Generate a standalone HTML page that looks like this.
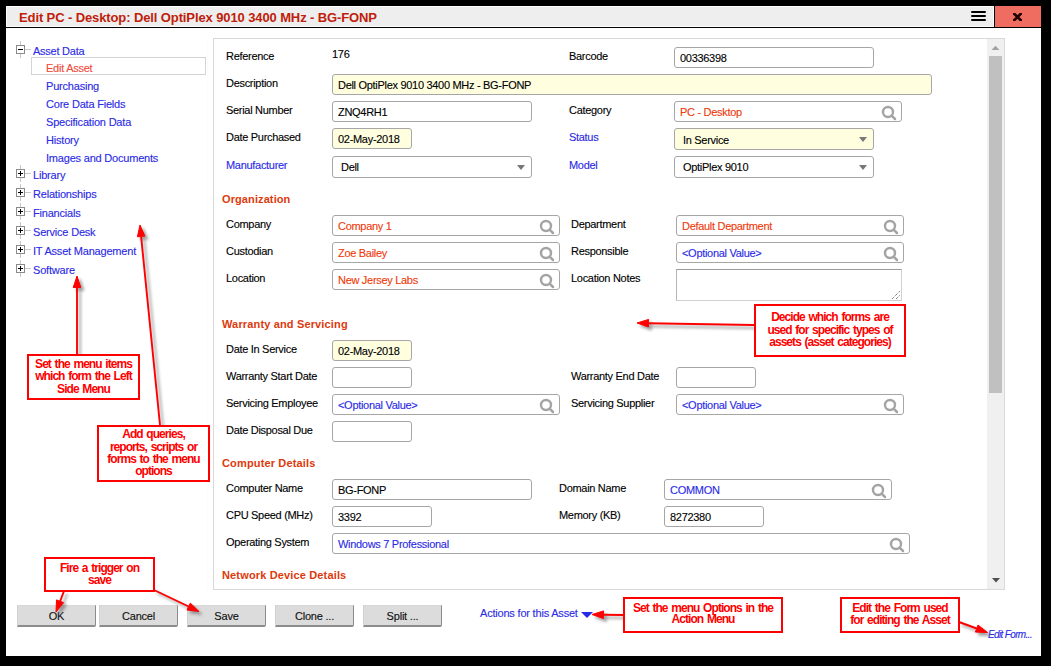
<!DOCTYPE html><html><head><meta charset="utf-8"><style>
html,body{margin:0;padding:0;}
body{width:1051px;height:666px;background:#000;position:relative;overflow:hidden;font-family:"Liberation Sans", sans-serif;}
.t{position:absolute;white-space:nowrap;font-family:"Liberation Sans", sans-serif;-webkit-text-stroke:0.12px currentColor;}
.r{position:absolute;box-sizing:border-box;}

</style></head><body>
<div class="r" style="left:6px;top:6px;width:1035px;height:650px;background:#ffffff;"></div>
<div class="r" style="left:6px;top:6px;width:988px;height:21px;background:#eeeeee;border:1px solid #ffffff;"></div>
<div class="r" style="left:6px;top:27px;width:1035px;height:1px;background:#000;"></div>
<div class="r" style="left:994px;top:6px;width:1px;height:21px;background:#000;"></div>
<div class="r" style="left:995px;top:6px;width:46px;height:21px;background:#ef6c61;"></div>
<svg class="r" style="left:1013px;top:13px" width="9" height="8" viewBox="0 0 9 8"><path d="M0.3 0 L8.7 8 M8.7 0 L0.3 8" stroke="#1e0000" stroke-width="2.7"/></svg>
<div class="r" style="left:971px;top:11px;width:15px;height:2px;background:#000;border-radius:1px;"></div>
<div class="r" style="left:971px;top:15px;width:15px;height:2px;background:#000;border-radius:1px;"></div>
<div class="r" style="left:971px;top:19px;width:15px;height:2px;background:#000;border-radius:1px;"></div>
<div class="t" style="left:19px;top:10px;font-size:13px;line-height:15px;color:#c0200a;font-weight:bold;-webkit-text-stroke:0;letter-spacing:-0.11px;">Edit PC - Desktop: Dell OptiPlex 9010 3400 MHz - BG-FONP</div>
<div class="r" style="left:20px;top:41px;width:1px;height:4px;background:#c8c8c8;"></div>
<div class="r" style="left:20px;top:54px;width:1px;height:4px;background:#c8c8c8;"></div>
<div class="r" style="left:25px;top:49px;width:6px;height:1px;background:#c8c8c8;"></div>
<div class="r" style="left:16px;top:45px;width:9px;height:9px;background:#fff;border:1px solid #8a8a8a;"></div>
<div class="r" style="left:18px;top:49px;width:5px;height:1px;background:#000;"></div>
<div class="t" style="left:33px;top:45px;font-size:11px;line-height:13px;color:#2a2ae6;letter-spacing:-0.25px;">Asset Data</div>
<div class="r" style="left:31px;top:57px;width:175px;height:18px;border:1px solid #d4d4d4;"></div>
<div class="t" style="left:46px;top:62px;font-size:11px;line-height:13px;color:#ef4a3a;letter-spacing:-0.25px;">Edit Asset</div>
<div class="t" style="left:46px;top:80px;font-size:11px;line-height:13px;color:#2a2ae6;letter-spacing:-0.2px;">Purchasing</div>
<div class="t" style="left:46px;top:98px;font-size:11px;line-height:13px;color:#2a2ae6;letter-spacing:-0.2px;">Core Data Fields</div>
<div class="t" style="left:46px;top:116px;font-size:11px;line-height:13px;color:#2a2ae6;letter-spacing:-0.2px;">Specification Data</div>
<div class="t" style="left:46px;top:134px;font-size:11px;line-height:13px;color:#2a2ae6;letter-spacing:-0.2px;">History</div>
<div class="t" style="left:46px;top:152px;font-size:11px;line-height:13px;color:#2a2ae6;letter-spacing:-0.2px;">Images and Documents</div>
<div class="r" style="left:20px;top:165px;width:1px;height:4px;background:#c8c8c8;"></div>
<div class="r" style="left:20px;top:178px;width:1px;height:4px;background:#c8c8c8;"></div>
<div class="r" style="left:25px;top:173px;width:6px;height:1px;background:#c8c8c8;"></div>
<div class="r" style="left:16px;top:169px;width:9px;height:9px;background:#fff;border:1px solid #8a8a8a;"></div>
<div class="r" style="left:18px;top:173px;width:5px;height:1px;background:#000;"></div>
<div class="r" style="left:20px;top:171px;width:1px;height:5px;background:#000;"></div>
<div class="t" style="left:33px;top:169px;font-size:11px;line-height:13px;color:#2a2ae6;letter-spacing:-0.2px;">Library</div>
<div class="r" style="left:20px;top:184px;width:1px;height:4px;background:#c8c8c8;"></div>
<div class="r" style="left:20px;top:197px;width:1px;height:4px;background:#c8c8c8;"></div>
<div class="r" style="left:25px;top:192px;width:6px;height:1px;background:#c8c8c8;"></div>
<div class="r" style="left:16px;top:188px;width:9px;height:9px;background:#fff;border:1px solid #8a8a8a;"></div>
<div class="r" style="left:18px;top:192px;width:5px;height:1px;background:#000;"></div>
<div class="r" style="left:20px;top:190px;width:1px;height:5px;background:#000;"></div>
<div class="t" style="left:33px;top:188px;font-size:11px;line-height:13px;color:#2a2ae6;letter-spacing:-0.2px;">Relationships</div>
<div class="r" style="left:20px;top:203px;width:1px;height:4px;background:#c8c8c8;"></div>
<div class="r" style="left:20px;top:216px;width:1px;height:4px;background:#c8c8c8;"></div>
<div class="r" style="left:25px;top:211px;width:6px;height:1px;background:#c8c8c8;"></div>
<div class="r" style="left:16px;top:207px;width:9px;height:9px;background:#fff;border:1px solid #8a8a8a;"></div>
<div class="r" style="left:18px;top:211px;width:5px;height:1px;background:#000;"></div>
<div class="r" style="left:20px;top:209px;width:1px;height:5px;background:#000;"></div>
<div class="t" style="left:33px;top:207px;font-size:11px;line-height:13px;color:#2a2ae6;letter-spacing:-0.2px;">Financials</div>
<div class="r" style="left:20px;top:222px;width:1px;height:4px;background:#c8c8c8;"></div>
<div class="r" style="left:20px;top:235px;width:1px;height:4px;background:#c8c8c8;"></div>
<div class="r" style="left:25px;top:230px;width:6px;height:1px;background:#c8c8c8;"></div>
<div class="r" style="left:16px;top:226px;width:9px;height:9px;background:#fff;border:1px solid #8a8a8a;"></div>
<div class="r" style="left:18px;top:230px;width:5px;height:1px;background:#000;"></div>
<div class="r" style="left:20px;top:228px;width:1px;height:5px;background:#000;"></div>
<div class="t" style="left:33px;top:226px;font-size:11px;line-height:13px;color:#2a2ae6;letter-spacing:-0.2px;">Service Desk</div>
<div class="r" style="left:20px;top:241px;width:1px;height:4px;background:#c8c8c8;"></div>
<div class="r" style="left:20px;top:254px;width:1px;height:4px;background:#c8c8c8;"></div>
<div class="r" style="left:25px;top:249px;width:6px;height:1px;background:#c8c8c8;"></div>
<div class="r" style="left:16px;top:245px;width:9px;height:9px;background:#fff;border:1px solid #8a8a8a;"></div>
<div class="r" style="left:18px;top:249px;width:5px;height:1px;background:#000;"></div>
<div class="r" style="left:20px;top:247px;width:1px;height:5px;background:#000;"></div>
<div class="t" style="left:33px;top:245px;font-size:11px;line-height:13px;color:#2a2ae6;letter-spacing:-0.2px;">IT Asset Management</div>
<div class="r" style="left:20px;top:260px;width:1px;height:4px;background:#c8c8c8;"></div>
<div class="r" style="left:20px;top:273px;width:1px;height:4px;background:#c8c8c8;"></div>
<div class="r" style="left:25px;top:268px;width:6px;height:1px;background:#c8c8c8;"></div>
<div class="r" style="left:16px;top:264px;width:9px;height:9px;background:#fff;border:1px solid #8a8a8a;"></div>
<div class="r" style="left:18px;top:268px;width:5px;height:1px;background:#000;"></div>
<div class="r" style="left:20px;top:266px;width:1px;height:5px;background:#000;"></div>
<div class="t" style="left:33px;top:264px;font-size:11px;line-height:13px;color:#2a2ae6;letter-spacing:-0.2px;">Software</div>
<div class="r" style="left:207px;top:38px;width:1px;height:552px;background:#fcfcfc;"></div>
<div class="r" style="left:213px;top:38px;width:792px;height:552px;background:#fff;border:1px solid #d9d9d9;"></div>
<div class="r" style="left:987px;top:39px;width:17px;height:550px;background:#f0f0f0;"></div>
<div class="r" style="left:989px;top:56px;width:13px;height:337px;background:#c0c0c0;"></div>
<svg class="r" style="left:991px;top:45px" width="9" height="5"><polygon points="0.5,5 8.5,5 4.5,0.8" fill="#a3a3a3"/></svg>
<svg class="r" style="left:992px;top:578px" width="8" height="5"><polygon points="0,0 8,0 4,4.5" fill="#505050"/></svg>
<div class="t" style="left:226px;top:50px;font-size:11px;line-height:13px;color:#000000;letter-spacing:-0.3px;">Reference</div>
<div class="t" style="left:332px;top:48px;font-size:11px;line-height:13px;color:#000000;letter-spacing:-0.3px;">176</div>
<div class="t" style="left:569px;top:50px;font-size:11px;line-height:13px;color:#000000;letter-spacing:-0.3px;">Barcode</div>
<div class="r" style="left:674px;top:47px;width:200px;height:21px;background:#ffffff;border:1px solid #a6a6a6;border-radius:3px;"></div>
<div class="t" style="left:680px;top:52px;font-size:11px;line-height:13px;color:#000000;letter-spacing:-0.3px;">00336398</div>
<div class="t" style="left:226px;top:77px;font-size:11px;line-height:13px;color:#000000;letter-spacing:-0.3px;">Description</div>
<div class="r" style="left:332px;top:74px;width:600px;height:21px;background:#ffffe0;border:1px solid #a6a6a6;border-radius:3px;"></div>
<div class="t" style="left:338px;top:79px;font-size:11px;line-height:13px;color:#000000;letter-spacing:-0.3px;">Dell OptiPlex 9010 3400 MHz - BG-FONP</div>
<div class="t" style="left:226px;top:104px;font-size:11px;line-height:13px;color:#000000;letter-spacing:-0.3px;">Serial Number</div>
<div class="r" style="left:332px;top:101px;width:200px;height:21px;background:#ffffff;border:1px solid #a6a6a6;border-radius:3px;"></div>
<div class="t" style="left:338px;top:106px;font-size:11px;line-height:13px;color:#000000;letter-spacing:-0.3px;">ZNQ4RH1</div>
<div class="t" style="left:569px;top:104px;font-size:11px;line-height:13px;color:#000000;letter-spacing:-0.3px;">Category</div>
<div class="r" style="left:674px;top:101px;width:228px;height:21px;background:#ffffff;border:1px solid #a6a6a6;border-radius:3px;"></div>
<div class="t" style="left:680px;top:106px;font-size:11px;line-height:13px;color:#f03a0a;letter-spacing:-0.3px;">PC - Desktop</div>
<svg class="r" style="left:881px;top:105px" width="16" height="16" viewBox="0 0 16 16"><circle cx="7" cy="7" r="5" fill="none" stroke="#a4a4a4" stroke-width="2.4"/><line x1="10.6" y1="10.6" x2="14" y2="14" stroke="#a4a4a4" stroke-width="2.5" stroke-linecap="round"/></svg>
<div class="t" style="left:226px;top:131px;font-size:11px;line-height:13px;color:#000000;letter-spacing:-0.3px;">Date Purchased</div>
<div class="r" style="left:332px;top:128px;width:80px;height:21px;background:#ffffe0;border:1px solid #a6a6a6;border-radius:3px;"></div>
<div class="t" style="left:338px;top:133px;font-size:11px;line-height:13px;color:#000000;letter-spacing:-0.3px;">02-May-2018</div>
<div class="t" style="left:569px;top:131px;font-size:11px;line-height:13px;color:#2a2ae6;letter-spacing:-0.3px;">Status</div>
<div class="r" style="left:674px;top:128px;width:200px;height:22px;background:#ffffe0;border:1px solid #a6a6a6;border-radius:3px;"></div>
<div class="t" style="left:683px;top:134px;font-size:11px;line-height:13px;color:#000000;letter-spacing:-0.3px;">In Service</div>
<svg class="r" style="left:859px;top:137px" width="8" height="5"><polygon points="0,0 8,0 4.0,5" fill="#777777"/></svg>
<div class="t" style="left:226px;top:159px;font-size:11px;line-height:13px;color:#2a2ae6;letter-spacing:-0.3px;">Manufacturer</div>
<div class="r" style="left:332px;top:156px;width:200px;height:22px;background:#ffffff;border:1px solid #a6a6a6;border-radius:3px;"></div>
<div class="t" style="left:341px;top:161px;font-size:11px;line-height:13px;color:#000000;letter-spacing:-0.3px;">Dell</div>
<svg class="r" style="left:517px;top:165px" width="8" height="5"><polygon points="0,0 8,0 4.0,5" fill="#777777"/></svg>
<div class="t" style="left:569px;top:159px;font-size:11px;line-height:13px;color:#2a2ae6;letter-spacing:-0.3px;">Model</div>
<div class="r" style="left:674px;top:156px;width:200px;height:22px;background:#ffffff;border:1px solid #a6a6a6;border-radius:3px;"></div>
<div class="t" style="left:683px;top:161px;font-size:11px;line-height:13px;color:#000000;letter-spacing:-0.3px;">OptiPlex 9010</div>
<svg class="r" style="left:859px;top:165px" width="8" height="5"><polygon points="0,0 8,0 4.0,5" fill="#777777"/></svg>
<div class="t" style="left:222px;top:193px;font-size:11px;line-height:13px;color:#dd3a0c;font-weight:bold;-webkit-text-stroke:0;letter-spacing:0.1px;">Organization</div>
<div class="t" style="left:226px;top:218px;font-size:11px;line-height:13px;color:#000000;letter-spacing:-0.3px;">Company</div>
<div class="r" style="left:332px;top:215px;width:228px;height:21px;background:#ffffff;border:1px solid #a6a6a6;border-radius:3px;"></div>
<div class="t" style="left:338px;top:220px;font-size:11px;line-height:13px;color:#f03a0a;letter-spacing:-0.3px;">Company 1</div>
<svg class="r" style="left:539px;top:219px" width="16" height="16" viewBox="0 0 16 16"><circle cx="7" cy="7" r="5" fill="none" stroke="#a4a4a4" stroke-width="2.4"/><line x1="10.6" y1="10.6" x2="14" y2="14" stroke="#a4a4a4" stroke-width="2.5" stroke-linecap="round"/></svg>
<div class="t" style="left:571px;top:218px;font-size:11px;line-height:13px;color:#000000;letter-spacing:-0.3px;">Department</div>
<div class="r" style="left:676px;top:215px;width:228px;height:21px;background:#ffffff;border:1px solid #a6a6a6;border-radius:3px;"></div>
<div class="t" style="left:682px;top:220px;font-size:11px;line-height:13px;color:#f03a0a;letter-spacing:-0.3px;">Default Department</div>
<svg class="r" style="left:883px;top:219px" width="16" height="16" viewBox="0 0 16 16"><circle cx="7" cy="7" r="5" fill="none" stroke="#a4a4a4" stroke-width="2.4"/><line x1="10.6" y1="10.6" x2="14" y2="14" stroke="#a4a4a4" stroke-width="2.5" stroke-linecap="round"/></svg>
<div class="t" style="left:226px;top:245px;font-size:11px;line-height:13px;color:#000000;letter-spacing:-0.3px;">Custodian</div>
<div class="r" style="left:332px;top:242px;width:228px;height:21px;background:#ffffff;border:1px solid #a6a6a6;border-radius:3px;"></div>
<div class="t" style="left:338px;top:247px;font-size:11px;line-height:13px;color:#f03a0a;letter-spacing:-0.3px;">Zoe Bailey</div>
<svg class="r" style="left:539px;top:246px" width="16" height="16" viewBox="0 0 16 16"><circle cx="7" cy="7" r="5" fill="none" stroke="#a4a4a4" stroke-width="2.4"/><line x1="10.6" y1="10.6" x2="14" y2="14" stroke="#a4a4a4" stroke-width="2.5" stroke-linecap="round"/></svg>
<div class="t" style="left:571px;top:245px;font-size:11px;line-height:13px;color:#000000;letter-spacing:-0.3px;">Responsible</div>
<div class="r" style="left:676px;top:242px;width:228px;height:21px;background:#ffffff;border:1px solid #a6a6a6;border-radius:3px;"></div>
<div class="t" style="left:682px;top:247px;font-size:11px;line-height:13px;color:#2a2ae6;letter-spacing:-0.3px;">&lt;Optional Value&gt;</div>
<svg class="r" style="left:883px;top:246px" width="16" height="16" viewBox="0 0 16 16"><circle cx="7" cy="7" r="5" fill="none" stroke="#a4a4a4" stroke-width="2.4"/><line x1="10.6" y1="10.6" x2="14" y2="14" stroke="#a4a4a4" stroke-width="2.5" stroke-linecap="round"/></svg>
<div class="t" style="left:226px;top:272px;font-size:11px;line-height:13px;color:#000000;letter-spacing:-0.3px;">Location</div>
<div class="r" style="left:332px;top:269px;width:228px;height:21px;background:#ffffff;border:1px solid #a6a6a6;border-radius:3px;"></div>
<div class="t" style="left:338px;top:274px;font-size:11px;line-height:13px;color:#f03a0a;letter-spacing:-0.3px;">New Jersey Labs</div>
<svg class="r" style="left:539px;top:273px" width="16" height="16" viewBox="0 0 16 16"><circle cx="7" cy="7" r="5" fill="none" stroke="#a4a4a4" stroke-width="2.4"/><line x1="10.6" y1="10.6" x2="14" y2="14" stroke="#a4a4a4" stroke-width="2.5" stroke-linecap="round"/></svg>
<div class="t" style="left:571px;top:272px;font-size:11px;line-height:13px;color:#000000;letter-spacing:-0.3px;">Location Notes</div>
<div class="r" style="left:676px;top:269px;width:226px;height:32px;background:#fff;border-top:1px solid #9a9a9a;border-left:1px solid #b5b5b5;border-right:1px solid #d0d0d0;border-bottom:1px solid #d0d0d0;"></div>
<svg class="r" style="left:890px;top:289px" width="11" height="11"><path d="M2 10 L10 2 M6 10 L10 6" stroke="#555" stroke-width="1" stroke-dasharray="1,1"/></svg>
<div class="t" style="left:222px;top:318px;font-size:11px;line-height:13px;color:#dd3a0c;font-weight:bold;-webkit-text-stroke:0;letter-spacing:0.15px;">Warranty and Servicing</div>
<div class="t" style="left:226px;top:343px;font-size:11px;line-height:13px;color:#000000;letter-spacing:-0.3px;">Date In Service</div>
<div class="r" style="left:332px;top:340px;width:80px;height:21px;background:#ffffe0;border:1px solid #a6a6a6;border-radius:3px;"></div>
<div class="t" style="left:338px;top:345px;font-size:11px;line-height:13px;color:#000000;letter-spacing:-0.3px;">02-May-2018</div>
<div class="t" style="left:226px;top:370px;font-size:11px;line-height:13px;color:#000000;letter-spacing:-0.3px;">Warranty Start Date</div>
<div class="r" style="left:332px;top:367px;width:80px;height:21px;background:#ffffff;border:1px solid #a6a6a6;border-radius:3px;"></div>
<div class="t" style="left:571px;top:370px;font-size:11px;line-height:13px;color:#000000;letter-spacing:-0.3px;">Warranty End Date</div>
<div class="r" style="left:676px;top:367px;width:80px;height:21px;background:#ffffff;border:1px solid #a6a6a6;border-radius:3px;"></div>
<div class="t" style="left:226px;top:397px;font-size:11px;line-height:13px;color:#000000;letter-spacing:-0.3px;">Servicing Employee</div>
<div class="r" style="left:332px;top:394px;width:228px;height:21px;background:#ffffff;border:1px solid #a6a6a6;border-radius:3px;"></div>
<div class="t" style="left:338px;top:399px;font-size:11px;line-height:13px;color:#2a2ae6;letter-spacing:-0.3px;">&lt;Optional Value&gt;</div>
<svg class="r" style="left:539px;top:398px" width="16" height="16" viewBox="0 0 16 16"><circle cx="7" cy="7" r="5" fill="none" stroke="#a4a4a4" stroke-width="2.4"/><line x1="10.6" y1="10.6" x2="14" y2="14" stroke="#a4a4a4" stroke-width="2.5" stroke-linecap="round"/></svg>
<div class="t" style="left:571px;top:397px;font-size:11px;line-height:13px;color:#000000;letter-spacing:-0.3px;">Servicing Supplier</div>
<div class="r" style="left:676px;top:394px;width:228px;height:21px;background:#ffffff;border:1px solid #a6a6a6;border-radius:3px;"></div>
<div class="t" style="left:682px;top:399px;font-size:11px;line-height:13px;color:#2a2ae6;letter-spacing:-0.3px;">&lt;Optional Value&gt;</div>
<svg class="r" style="left:883px;top:398px" width="16" height="16" viewBox="0 0 16 16"><circle cx="7" cy="7" r="5" fill="none" stroke="#a4a4a4" stroke-width="2.4"/><line x1="10.6" y1="10.6" x2="14" y2="14" stroke="#a4a4a4" stroke-width="2.5" stroke-linecap="round"/></svg>
<div class="t" style="left:226px;top:424px;font-size:11px;line-height:13px;color:#000000;letter-spacing:-0.3px;">Date Disposal Due</div>
<div class="r" style="left:332px;top:421px;width:80px;height:21px;background:#ffffff;border:1px solid #a6a6a6;border-radius:3px;"></div>
<div class="t" style="left:222px;top:457px;font-size:11px;line-height:13px;color:#dd3a0c;font-weight:bold;-webkit-text-stroke:0;letter-spacing:0.15px;">Computer Details</div>
<div class="t" style="left:226px;top:482px;font-size:11px;line-height:13px;color:#000000;letter-spacing:-0.3px;">Computer Name</div>
<div class="r" style="left:332px;top:479px;width:200px;height:21px;background:#ffffff;border:1px solid #a6a6a6;border-radius:3px;"></div>
<div class="t" style="left:338px;top:484px;font-size:11px;line-height:13px;color:#000000;letter-spacing:-0.3px;">BG-FONP</div>
<div class="t" style="left:559px;top:482px;font-size:11px;line-height:13px;color:#000000;letter-spacing:-0.3px;">Domain Name</div>
<div class="r" style="left:664px;top:479px;width:228px;height:21px;background:#ffffff;border:1px solid #a6a6a6;border-radius:3px;"></div>
<div class="t" style="left:670px;top:484px;font-size:11px;line-height:13px;color:#2a2ae6;letter-spacing:-0.3px;">COMMON</div>
<svg class="r" style="left:871px;top:483px" width="16" height="16" viewBox="0 0 16 16"><circle cx="7" cy="7" r="5" fill="none" stroke="#a4a4a4" stroke-width="2.4"/><line x1="10.6" y1="10.6" x2="14" y2="14" stroke="#a4a4a4" stroke-width="2.5" stroke-linecap="round"/></svg>
<div class="t" style="left:226px;top:509px;font-size:11px;line-height:13px;color:#000000;letter-spacing:-0.3px;">CPU Speed (MHz)</div>
<div class="r" style="left:332px;top:506px;width:100px;height:21px;background:#ffffff;border:1px solid #a6a6a6;border-radius:3px;"></div>
<div class="t" style="left:338px;top:511px;font-size:11px;line-height:13px;color:#000000;letter-spacing:-0.3px;">3392</div>
<div class="t" style="left:559px;top:509px;font-size:11px;line-height:13px;color:#000000;letter-spacing:-0.3px;">Memory (KB)</div>
<div class="r" style="left:664px;top:506px;width:100px;height:21px;background:#ffffff;border:1px solid #a6a6a6;border-radius:3px;"></div>
<div class="t" style="left:670px;top:511px;font-size:11px;line-height:13px;color:#000000;letter-spacing:-0.3px;">8272380</div>
<div class="t" style="left:226px;top:536px;font-size:11px;line-height:13px;color:#000000;letter-spacing:-0.3px;">Operating System</div>
<div class="r" style="left:332px;top:533px;width:578px;height:21px;background:#ffffff;border:1px solid #a6a6a6;border-radius:3px;"></div>
<div class="t" style="left:338px;top:538px;font-size:11px;line-height:13px;color:#2a2ae6;letter-spacing:-0.3px;">Windows 7 Professional</div>
<svg class="r" style="left:889px;top:537px" width="16" height="16" viewBox="0 0 16 16"><circle cx="7" cy="7" r="5" fill="none" stroke="#a4a4a4" stroke-width="2.4"/><line x1="10.6" y1="10.6" x2="14" y2="14" stroke="#a4a4a4" stroke-width="2.5" stroke-linecap="round"/></svg>
<div class="t" style="left:222px;top:569px;font-size:11px;line-height:13px;color:#dd3a0c;font-weight:bold;-webkit-text-stroke:0;letter-spacing:0.15px;">Network Device Details</div>
<div class="r" style="left:17px;top:605px;width:79px;height:22px;background:#dcdcdc;border-top:1px solid #d8d8d8;border-left:1px solid #d0d0d0;border-right:1px solid #8c8c8c;border-bottom:2px solid #8c8c8c;border-bottom-right-radius:2px;"></div>
<div class="t" style="left:17px;width:79px;text-align:center;top:610px;font-size:11px;line-height:13px;color:#101010;letter-spacing:-0.2px">OK</div>
<div class="r" style="left:99px;top:605px;width:79px;height:22px;background:#dcdcdc;border-top:1px solid #d8d8d8;border-left:1px solid #d0d0d0;border-right:1px solid #8c8c8c;border-bottom:2px solid #8c8c8c;border-bottom-right-radius:2px;"></div>
<div class="t" style="left:99px;width:79px;text-align:center;top:610px;font-size:11px;line-height:13px;color:#101010;letter-spacing:-0.2px">Cancel</div>
<div class="r" style="left:187px;top:605px;width:79px;height:22px;background:#dcdcdc;border-top:1px solid #d8d8d8;border-left:1px solid #d0d0d0;border-right:1px solid #8c8c8c;border-bottom:2px solid #8c8c8c;border-bottom-right-radius:2px;"></div>
<div class="t" style="left:187px;width:79px;text-align:center;top:610px;font-size:11px;line-height:13px;color:#101010;letter-spacing:-0.2px">Save</div>
<div class="r" style="left:275px;top:605px;width:79px;height:22px;background:#dcdcdc;border-top:1px solid #d8d8d8;border-left:1px solid #d0d0d0;border-right:1px solid #8c8c8c;border-bottom:2px solid #8c8c8c;border-bottom-right-radius:2px;"></div>
<div class="t" style="left:275px;width:79px;text-align:center;top:610px;font-size:11px;line-height:13px;color:#101010;letter-spacing:-0.2px">Clone ...</div>
<div class="r" style="left:363px;top:605px;width:79px;height:22px;background:#dcdcdc;border-top:1px solid #d8d8d8;border-left:1px solid #d0d0d0;border-right:1px solid #8c8c8c;border-bottom:2px solid #8c8c8c;border-bottom-right-radius:2px;"></div>
<div class="t" style="left:363px;width:79px;text-align:center;top:610px;font-size:11px;line-height:13px;color:#101010;letter-spacing:-0.2px">Split ...</div>
<div class="t" style="left:480px;top:607px;font-size:11px;line-height:13px;color:#2a2ae6;letter-spacing:-0.2px;">Actions for this Asset</div>
<svg class="r" style="left:581px;top:612px" width="12" height="6"><polygon points="0,0 12,0 6,6" fill="#2a2ae6"/></svg>
<div class="t" style="left:988px;top:629px;font-size:10px;line-height:12px;color:#2a2ae6;font-style:italic;letter-spacing:-0.65px;">Edit Form...</div>
<svg class="r" style="left:0;top:0" width="1051" height="666"><defs><filter id="sh" x="-50%" y="-50%" width="200%" height="200%"><feGaussianBlur stdDeviation="1.6"/></filter></defs><g filter="url(#sh)" stroke="#777" fill="#777" opacity="0.7"><line x1="80" y1="358" x2="80.0" y2="290.5" stroke-width="1.9"/><polygon points="80,279 83.8,290.5 76.2,290.5"/></g><g filter="url(#sh)" stroke="#777" fill="#777" opacity="0.7"><line x1="163" y1="428" x2="144.1" y2="239.4" stroke-width="1.9"/><polygon points="143,228 147.9,239.1 140.4,239.8"/></g><g filter="url(#sh)" stroke="#777" fill="#777" opacity="0.7"><line x1="757" y1="328" x2="651.5" y2="326.2" stroke-width="1.9"/><polygon points="640,326 651.6,322.4 651.4,330.0"/></g><g filter="url(#sh)" stroke="#777" fill="#777" opacity="0.7"><line x1="67" y1="594" x2="63.1" y2="604.3" stroke-width="1.9"/><polygon points="59,615 59.5,602.9 66.6,605.6"/></g><g filter="url(#sh)" stroke="#777" fill="#777" opacity="0.7"><line x1="157" y1="593" x2="191.6" y2="609.5" stroke-width="1.9"/><polygon points="202,614.5 190.0,613.0 193.3,606.1"/></g><g filter="url(#sh)" stroke="#777" fill="#777" opacity="0.7"><line x1="626" y1="618" x2="606.5" y2="617.7" stroke-width="1.9"/><polygon points="595,617.5 606.6,613.9 606.4,621.5"/></g><g filter="url(#sh)" stroke="#777" fill="#777" opacity="0.7"><line x1="962" y1="625" x2="979.7" y2="631.5" stroke-width="1.9"/><polygon points="990.5,635.5 978.4,635.1 981.0,628.0"/></g><g stroke="#ff0000" fill="#ff0000"><line x1="77" y1="355" x2="77.0" y2="287.5" stroke-width="1.9"/><polygon points="77,276 80.8,287.5 73.2,287.5"/></g><g stroke="#ff0000" fill="#ff0000"><line x1="160" y1="425" x2="141.1" y2="236.4" stroke-width="1.9"/><polygon points="140,225 144.9,236.1 137.4,236.8"/></g><g stroke="#ff0000" fill="#ff0000"><line x1="754" y1="325" x2="648.5" y2="323.2" stroke-width="1.9"/><polygon points="637,323 648.6,319.4 648.4,327.0"/></g><g stroke="#ff0000" fill="#ff0000"><line x1="64" y1="591" x2="60.1" y2="601.3" stroke-width="1.9"/><polygon points="56,612 56.5,599.9 63.6,602.6"/></g><g stroke="#ff0000" fill="#ff0000"><line x1="154" y1="590" x2="188.6" y2="606.5" stroke-width="1.9"/><polygon points="199,611.5 187.0,610.0 190.3,603.1"/></g><g stroke="#ff0000" fill="#ff0000"><line x1="623" y1="615" x2="603.5" y2="614.7" stroke-width="1.9"/><polygon points="592,614.5 603.6,610.9 603.4,618.5"/></g><g stroke="#ff0000" fill="#ff0000"><line x1="959" y1="622" x2="976.7" y2="628.5" stroke-width="1.9"/><polygon points="987.5,632.5 975.4,632.1 978.0,625.0"/></g></svg>
<div class="r" style="left:27px;top:354px;width:113px;height:46px;background:#fff;border:2px solid #ff0000;"></div>
<div class="t" style="left:27px;width:113px;text-align:center;top:357px;font-size:12px;line-height:14px;font-weight:bold;color:#ff0000;letter-spacing:-0.95px;word-spacing:1.3px;-webkit-text-stroke:0">Set the menu items</div>
<div class="t" style="left:27px;width:113px;text-align:center;top:369px;font-size:12px;line-height:14px;font-weight:bold;color:#ff0000;letter-spacing:-0.95px;word-spacing:1.3px;-webkit-text-stroke:0">which form the Left</div>
<div class="t" style="left:27px;width:113px;text-align:center;top:382px;font-size:12px;line-height:14px;font-weight:bold;color:#ff0000;letter-spacing:-0.95px;word-spacing:1.3px;-webkit-text-stroke:0">Side Menu</div>
<div class="r" style="left:97px;top:425px;width:113px;height:57px;background:#fff;border:2px solid #ff0000;"></div>
<div class="t" style="left:97px;width:113px;text-align:center;top:427px;font-size:12px;line-height:14px;font-weight:bold;color:#ff0000;letter-spacing:-0.95px;word-spacing:1.3px;-webkit-text-stroke:0">Add queries,</div>
<div class="t" style="left:97px;width:113px;text-align:center;top:440px;font-size:12px;line-height:14px;font-weight:bold;color:#ff0000;letter-spacing:-0.95px;word-spacing:1.3px;-webkit-text-stroke:0">reports, scripts or</div>
<div class="t" style="left:97px;width:113px;text-align:center;top:452px;font-size:12px;line-height:14px;font-weight:bold;color:#ff0000;letter-spacing:-0.95px;word-spacing:1.3px;-webkit-text-stroke:0">forms to the menu</div>
<div class="t" style="left:97px;width:113px;text-align:center;top:464px;font-size:12px;line-height:14px;font-weight:bold;color:#ff0000;letter-spacing:-0.95px;word-spacing:1.3px;-webkit-text-stroke:0">options</div>
<div class="r" style="left:754px;top:304px;width:152px;height:53px;background:#fff;border:2px solid #ff0000;"></div>
<div class="t" style="left:754px;width:152px;text-align:center;top:310px;font-size:12px;line-height:14px;font-weight:bold;color:#ff0000;letter-spacing:-0.95px;word-spacing:1.3px;-webkit-text-stroke:0">Decide which forms are</div>
<div class="t" style="left:754px;width:152px;text-align:center;top:323px;font-size:12px;line-height:14px;font-weight:bold;color:#ff0000;letter-spacing:-0.95px;word-spacing:1.3px;-webkit-text-stroke:0">used for specific types of</div>
<div class="t" style="left:754px;width:152px;text-align:center;top:335px;font-size:12px;line-height:14px;font-weight:bold;color:#ff0000;letter-spacing:-0.95px;word-spacing:1.3px;-webkit-text-stroke:0">assets (asset categories)</div>
<div class="r" style="left:44px;top:557px;width:111px;height:35px;background:#fff;border:2px solid #ff0000;"></div>
<div class="t" style="left:44px;width:111px;text-align:center;top:561px;font-size:12px;line-height:14px;font-weight:bold;color:#ff0000;letter-spacing:-0.95px;word-spacing:1.3px;-webkit-text-stroke:0">Fire a trigger on</div>
<div class="t" style="left:44px;width:111px;text-align:center;top:573px;font-size:12px;line-height:14px;font-weight:bold;color:#ff0000;letter-spacing:-0.95px;word-spacing:1.3px;-webkit-text-stroke:0">save</div>
<div class="r" style="left:623px;top:597px;width:160px;height:36px;background:#fff;border:2px solid #ff0000;"></div>
<div class="t" style="left:623px;width:160px;text-align:center;top:601px;font-size:12px;line-height:14px;font-weight:bold;color:#ff0000;letter-spacing:-0.95px;word-spacing:1.3px;-webkit-text-stroke:0">Set the menu Options in the</div>
<div class="t" style="left:623px;width:160px;text-align:center;top:612px;font-size:12px;line-height:14px;font-weight:bold;color:#ff0000;letter-spacing:-0.95px;word-spacing:1.3px;-webkit-text-stroke:0">Action Menu</div>
<div class="r" style="left:840px;top:597px;width:120px;height:36px;background:#fff;border:2px solid #ff0000;"></div>
<div class="t" style="left:840px;width:120px;text-align:center;top:601px;font-size:12px;line-height:14px;font-weight:bold;color:#ff0000;letter-spacing:-0.95px;word-spacing:1.3px;-webkit-text-stroke:0">Edit the Form used</div>
<div class="t" style="left:840px;width:120px;text-align:center;top:613px;font-size:12px;line-height:14px;font-weight:bold;color:#ff0000;letter-spacing:-0.95px;word-spacing:1.3px;-webkit-text-stroke:0">for editing the Asset</div>
</body></html>
